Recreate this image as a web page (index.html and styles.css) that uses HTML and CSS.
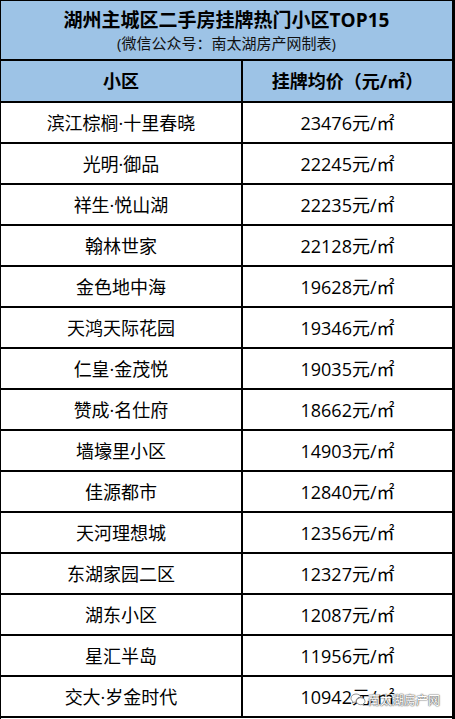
FILE: index.html
```html
<!DOCTYPE html>
<html lang="zh">
<head>
<meta charset="utf-8">
<title>湖州主城区二手房挂牌热门小区TOP15</title>
<link rel="stylesheet" href="styles.css">
</head>
<body>
<div class="sheet">
  <div class="title">
    <div class="title-main">湖州主城区二手房挂牌热门小区TOP15</div>
    <div class="title-sub">(微信公众号：南太湖房产网制表)</div>
  </div>
  <div class="row head">
    <div class="cell name">小区</div>
    <div class="cell price">挂牌均价（元/㎡）</div>
  </div>
  <div class="row"><div class="cell name">滨江棕榈·十里春晓</div><div class="cell price">23476元/㎡</div></div>
  <div class="row"><div class="cell name">光明·御品</div><div class="cell price">22245元/㎡</div></div>
  <div class="row"><div class="cell name">祥生·悦山湖</div><div class="cell price">22235元/㎡</div></div>
  <div class="row"><div class="cell name">翰林世家</div><div class="cell price">22128元/㎡</div></div>
  <div class="row"><div class="cell name">金色地中海</div><div class="cell price">19628元/㎡</div></div>
  <div class="row"><div class="cell name">天鸿天际花园</div><div class="cell price">19346元/㎡</div></div>
  <div class="row"><div class="cell name">仁皇·金茂悦</div><div class="cell price">19035元/㎡</div></div>
  <div class="row"><div class="cell name">赞成·名仕府</div><div class="cell price">18662元/㎡</div></div>
  <div class="row"><div class="cell name">墙壕里小区</div><div class="cell price">14903元/㎡</div></div>
  <div class="row"><div class="cell name">佳源都市</div><div class="cell price">12840元/㎡</div></div>
  <div class="row"><div class="cell name">天河理想城</div><div class="cell price">12356元/㎡</div></div>
  <div class="row"><div class="cell name">东湖家园二区</div><div class="cell price">12327元/㎡</div></div>
  <div class="row"><div class="cell name">湖东小区</div><div class="cell price">12087元/㎡</div></div>
  <div class="row"><div class="cell name">星汇半岛</div><div class="cell price">11956元/㎡</div></div>
  <div class="row"><div class="cell name">交大·岁金时代</div><div class="cell price">10942元/㎡</div></div>
  <div class="watermark">
    <svg class="wm-icon" width="16" height="14" viewBox="0 0 16 14">
      <path d="M6 1C3 1 1 3 1 5.3c0 1.3.7 2.4 1.8 3.2L2.3 10l1.8-.9c.6.2 1.2.3 1.9.3h.3C6.1 9 6 8.6 6 8.2 6 6 8 4.3 10.6 4.3h.4C10.5 2.4 8.5 1 6 1z" fill="#fff" stroke="#777" stroke-width=".8"/>
      <path d="M15 8.2c0-2-2-3.5-4.3-3.5S6.4 6.2 6.4 8.2s2 3.5 4.3 3.5c.5 0 1-.1 1.4-.2l1.5.8-.4-1.3c1.1-.7 1.8-1.6 1.8-2.8z" fill="#fff" stroke="#777" stroke-width=".8"/>
    </svg>
    <span class="wm-text">南太湖房产网</span>
  </div>
</div>
</body>
</html>
```

FILE: styles.css
```css
html, body {
  margin: 0;
  padding: 0;
  background: #ffffff;
}

body {
  font-family: "Open Sans", "Noto Sans CJK SC", sans-serif;
  color: #000;
}

.sheet {
  position: relative;
  width: 455px;
  height: 719px;
  box-sizing: border-box;
  border-left: 1px solid #000;
  border-right: 3px solid #000;
  border-top: 1px solid #000;
}

.title {
  height: 58px;
  border-bottom: 2px solid #000;
  background: #9dc3e6;
  display: flex;
  flex-direction: column;
  align-items: center;
  justify-content: flex-start;
}

.title-main {
  font-weight: bold;
  font-size: 19px;
  line-height: 24px;
  margin-top: 7px;
}

.title-sub {
  font-size: 15px;
  line-height: 20px;
  margin-top: 1px;
  color: #111;
}

.row {
  display: grid;
  grid-template-columns: 242px 209px;
  height: 39px;
  border-bottom: 2px solid #000;
}

.row.head {
  height: 40px;
  background: #9dc3e6;
  font-weight: bold;
}

.cell {
  display: flex;
  align-items: center;
  justify-content: center;
  font-size: 18px;
  line-height: 1;
  box-sizing: border-box;
}

.cell.name {
  border-right: 2px solid #000;
}

.watermark {
  position: absolute;
  right: 12px;
  bottom: 12px;
  display: flex;
  align-items: center;
  gap: 2px;
}

.wm-icon {
  display: block;
}

.wm-text {
  font-family: "Noto Sans CJK SC", sans-serif;
  font-size: 12px;
  line-height: 14px;
  color: #fff;
  text-shadow: 0 0 1px #555, 0 0 1px #555, 0 0 2px #888;
}
```
